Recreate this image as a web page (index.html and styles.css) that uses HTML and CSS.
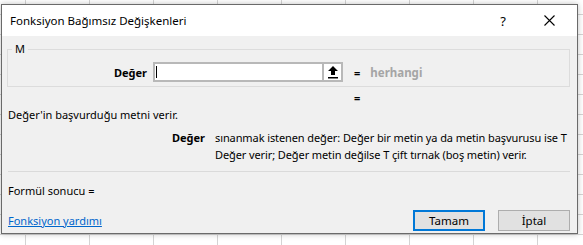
FILE: index.html
```html
<!DOCTYPE html>
<html lang="tr">
<head>
  <meta charset="UTF-8">
  <meta name="viewport" content="width=device-width, initial-scale=1.0">
  <title>Fonksiyon Bağımsız Değişkenleri</title>
  <link rel="stylesheet" href="styles.css">
</head>
<body>
  <div class="dialog">
    <div class="titlebar">
      <span class="title">Fonksiyon Bağımsız Değişkenleri</span>
      <span class="help">?</span>
      <span class="close">
        <svg width="11" height="11" viewBox="0 0 11 11"><path d="M0.5 0.5 L10.5 10.5 M10.5 0.5 L0.5 10.5" stroke="#000" stroke-width="1.1" fill="none"/></svg>
      </span>
    </div>

    <div class="content">
      <fieldset class="args">
        <legend>M</legend>
        <div class="arg-row">
          <label class="arg-label">Değer</label>
          <div class="ref-input">
            <div class="ref-field"><span class="caret"></span></div>
            <div class="collapse">
              <svg width="12" height="13" viewBox="0 0 12 13"><path d="M6 0 L11 5 L8 5 L8 9 L4 9 L4 5 L1 5 Z" fill="#000"/><rect x="1" y="11" width="10" height="1.5" fill="#000"/></svg>
            </div>
          </div>
          <span class="eq">=</span>
          <span class="arg-value">herhangi</span>
        </div>
      </fieldset>

      <div class="result-eq">=</div>

      <p class="func-desc">Değer'in başvurduğu metni verir.</p>

      <div class="arg-desc">
        <b>Değer</b>
        <p>sınanmak istenen değer: Değer bir metin ya da metin başvurusu ise T Değer verir; Değer metin değilse T çift tırnak (boş metin) verir.</p>
      </div>

      <div class="separator"></div>

      <div class="formula">Formül sonucu =</div>

      <div class="footer">
        <a href="#" class="help-link">Fonksiyon yardımı</a>
        <div class="buttons">
          <button class="btn primary">Tamam</button>
          <button class="btn">İptal</button>
        </div>
      </div>
    </div>
  </div>
</body>
</html>
```

FILE: styles.css
```css
html, body {
  margin: 0;
  height: 100%;
}
body {
  font-family: 'Noto Sans', 'Open Sans', sans-serif;
  font-size: 11px;
  color: #000;
  background-color: #fff;
  background-image:
    linear-gradient(to right, #d4d4d4 1px, transparent 1px),
    linear-gradient(to bottom, #d4d4d4 1px, transparent 1px);
  background-size: 64px 20px;
  background-position: 25px 0, 0 -6px;
  padding-top: 4px;
  overflow: hidden;
}
.dialog {
  width: 577px;
  height: 230px;
  margin-left: 1px;
  box-sizing: border-box;
  border: 1px solid #6a6a6a;
  background: #f0f0f0;
  box-shadow: 0 0 6px rgba(0, 0, 0, 0.25);
  display: flex;
  flex-direction: column;
}
.titlebar {
  height: 31px;
  background: #fff;
  display: flex;
  align-items: center;
  padding-left: 8px;
}
.title {
  flex: 1;
  font-size: 11.5px;
}
.help {
  font-size: 13px;
  width: 44px;
  text-align: center;
}
.close {
  width: 48px;
  display: flex;
  justify-content: center;
  padding-right: 4px;
}
.content {
  flex: 1;
  padding: 6px 7px 0 5px;
  display: flex;
  flex-direction: column;
}
.args {
  margin: 0;
  padding: 6px 0 4px 0;
  border: 1px solid #dcdcdc;
}
.args legend {
  padding: 0 3px;
  margin-left: 4px;
  line-height: 14px;
}
.arg-row {
  display: flex;
  align-items: center;
}
.arg-label {
  width: 139px;
  text-align: right;
  font-weight: bold;
  margin-right: 6px;
}
.ref-input {
  display: flex;
  height: 20px;
}
.ref-field {
  width: 166px;
  border: 2px solid #b8b8b8;
  border-right: none;
  background: #fff;
  display: flex;
  align-items: center;
  padding-left: 1px;
}
.caret {
  width: 1px;
  height: 12px;
  background: #000;
}
.collapse {
  width: 17px;
  border: 2px solid #b8b8b8;
  background: #fff;
  display: flex;
  align-items: center;
  justify-content: center;
}
.eq {
  margin-left: 11px;
  font-weight: bold;
}
.arg-value {
  margin-left: 10px;
  color: #a5a5a5;
  font-weight: bold;
  font-size: 11.5px;
}
.result-eq {
  margin: 3px 0 0 347px;
  font-weight: bold;
  line-height: 16px;
}
.func-desc {
  margin: 1px 0 0 1px;
  line-height: 16px;
}
.arg-desc {
  display: flex;
  margin-top: 6px;
  line-height: 17px;
}
.arg-desc b {
  width: 198px;
  text-align: right;
  margin-right: 10px;
  flex-shrink: 0;
}
.arg-desc p {
  margin: 0 -6px 0 0;
  flex: 1;
  letter-spacing: -0.1px;
}
.separator {
  height: 1px;
  background: #dadada;
  margin: 8px 0 0 1px;
}
.formula {
  margin: 11px 0 0 1px;
  line-height: 16px;
}
.footer {
  display: flex;
  align-items: center;
  justify-content: space-between;
  margin-top: 11px;
  padding-left: 1px;
}
.help-link {
  color: #0066cc;
  text-decoration: underline;
}
.buttons {
  display: flex;
  gap: 13px;
}
.btn {
  width: 72px;
  height: 21px;
  box-sizing: border-box;
  font-family: inherit;
  font-size: 11.5px;
  background: #e1e1e1;
  border: 1px solid #adadad;
  padding: 0;
}
.btn.primary {
  border: 2px solid #0078d7;
}
```
